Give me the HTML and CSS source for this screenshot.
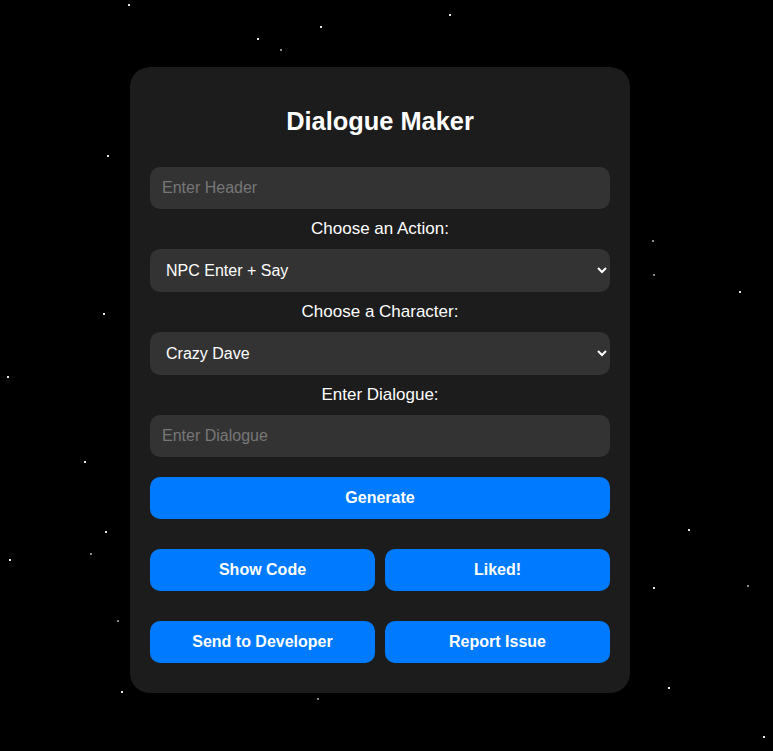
FILE: index.html
```html
<!DOCTYPE html>
<html lang="en">
<head>
<meta charset="utf-8">
<title>Dialogue Maker</title>
<link rel="stylesheet" href="styles.css">
</head>
<body>
<div class="stars">
  <span class="star" style="left:128px;top:4px"></span>
  <span class="star" style="left:449px;top:14px"></span>
  <span class="star" style="left:320px;top:26px"></span>
  <span class="star" style="left:257px;top:38px"></span>
  <span class="star dim" style="left:280px;top:49px"></span>
  <span class="star" style="left:107px;top:155px"></span>
  <span class="star dim" style="left:652px;top:240px"></span>
  <span class="star dim" style="left:653px;top:274px"></span>
  <span class="star" style="left:739px;top:291px"></span>
  <span class="star" style="left:103px;top:313px"></span>
  <span class="star" style="left:7px;top:376px"></span>
  <span class="star" style="left:84px;top:461px"></span>
  <span class="star" style="left:688px;top:529px"></span>
  <span class="star" style="left:105px;top:531px"></span>
  <span class="star dim" style="left:90px;top:553px"></span>
  <span class="star" style="left:9px;top:559px"></span>
  <span class="star" style="left:653px;top:587px"></span>
  <span class="star dim" style="left:747px;top:585px"></span>
  <span class="star dim" style="left:117px;top:620px"></span>
  <span class="star" style="left:668px;top:687px"></span>
  <span class="star" style="left:121px;top:691px"></span>
  <span class="star dim" style="left:317px;top:698px"></span>
  <span class="star" style="left:763px;top:736px"></span>
</div>
<main class="page">
  <section class="card">
    <h2 class="title">Dialogue Maker</h2>
    <input class="field" type="text" placeholder="Enter Header">
    <label class="label">Choose an Action:</label>
    <select class="field select">
      <option>NPC Enter + Say</option>
    </select>
    <label class="label">Choose a Character:</label>
    <select class="field select">
      <option>Crazy Dave</option>
    </select>
    <label class="label">Enter Dialogue:</label>
    <input class="field" type="text" placeholder="Enter Dialogue">
    <button class="btn btn-generate">Generate</button>
    <div class="row">
      <button class="btn">Show Code</button>
      <button class="btn">Liked!</button>
    </div>
    <div class="row">
      <button class="btn">Send to Developer</button>
      <button class="btn">Report Issue</button>
    </div>
  </section>
</main>
</body>
</html>
```

FILE: styles.css
```css
html, body {
  margin: 0;
  padding: 0;
  background: #000;
  height: 100%;
}

body {
  font-family: "Liberation Sans", Arial, sans-serif;
  color: #fff;
  overflow: hidden;
}

.stars {
  position: fixed;
  inset: 0;
  pointer-events: none;
}

.star {
  position: absolute;
  width: 2px;
  height: 2px;
  background: #e6e6e6;
}

.star.dim {
  background: #8a8a8a;
}

.page {
  position: relative;
  display: flex;
  justify-content: center;
  padding: 67px 13px 0 0;
}

.card {
  width: 500px;
  box-sizing: border-box;
  background: #1c1c1c;
  border-radius: 20px;
  padding: 20px 20px 30px;
  display: flex;
  flex-direction: column;
}

.title {
  margin: 20px 0 32px;
  font-size: 25.4px;
  line-height: 28px;
  font-weight: bold;
  text-align: center;
}

.field {
  display: block;
  width: 100%;
  box-sizing: border-box;
  border: none;
  outline: none;
  background: #333;
  color: #fff;
  border-radius: 10px;
  font-family: "Liberation Sans", Arial, sans-serif;
  font-size: 16px;
  line-height: 18px;
  padding: 12px;
  height: 42px;
  margin: 0;
}

.field::placeholder {
  color: #777;
}

.select {
  height: 43px;
  padding: 12px 8px 12px 12px;
}

.label {
  display: block;
  text-align: center;
  font-size: 17px;
  line-height: 18px;
  margin: 11px 0 11px;
}

.btn {
  height: 42px;
  border: none;
  border-radius: 10px;
  background: #007bff;
  color: #fff;
  font-family: "Liberation Sans", Arial, sans-serif;
  font-size: 16px;
  font-weight: bold;
  padding: 0;
}

.btn-generate {
  margin-top: 20px;
}

.row {
  display: flex;
  gap: 10px;
  margin-top: 30px;
}

.row .btn {
  flex: 1;
}
```
